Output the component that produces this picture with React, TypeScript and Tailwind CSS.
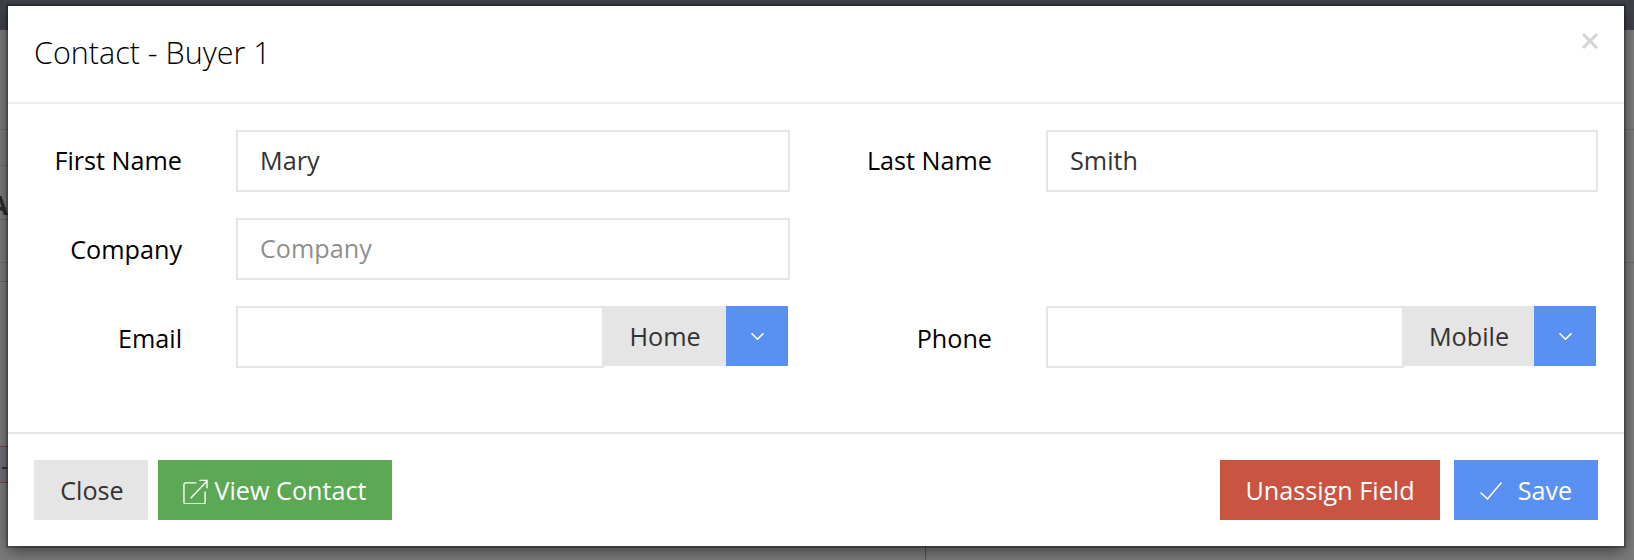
import { ChangeEvent, useState } from "react";

function ChevronIcon() {
  return (
    <svg width="15" height="9" viewBox="0 0 15 9" fill="none" stroke="white" strokeWidth="1.6">
      <path d="M1.5 1.2 L7.5 7.2 L13.5 1.2" />
    </svg>
  );
}

// page behind the dialog, only slivers of it show at the edges
function Backdrop() {
  return (
    <div className="absolute inset-0 -z-10 overflow-hidden bg-[#7c7c7c]">
      <div className="h-[30px] bg-[#3e4248]" />
      <div className="absolute left-0 right-0 top-[129px] h-px bg-[#6c6c6c]" />
      <div className="absolute left-0 top-[165px] h-px w-[8px] bg-[#6c6c6c]" />
      <div className="absolute left-0 top-[219px] h-px w-[8px] bg-[#666666]" />
      <div className="absolute left-0 right-0 top-[262px] h-px bg-[#6c6c6c]" />
      <div className="absolute left-0 top-[281px] h-px w-[8px] bg-[#666666]" />
      <div className="absolute left-0 top-[446px] h-[37px] w-[8px] border-y border-[#8a3a2e] bg-[#6f7178]" />
      <span className="absolute left-[-10px] top-[188px] text-[26px] font-bold leading-[34px] text-[#2a2a2a]">A</span>
      <div className="absolute left-[2px] top-[467px] h-[2px] w-[5px] bg-[#333333]" />
      <div className="absolute bottom-0 left-[925px] top-[540px] w-px bg-[#555555]" />
    </div>
  );
}

function TextField({ value, placeholder }: { value?: string; placeholder?: string }) {
  const [text, setText] = useState(value ?? "");
  return (
    <input
      type="text"
      value={text}
      placeholder={placeholder}
      onChange={(e: ChangeEvent<HTMLInputElement>) => setText(e.target.value)}
      className="h-[62px] w-full border-2 border-[#e5e5e5] bg-white px-[22px] pb-[2px] text-[25.2px] text-[#333333] outline-none placeholder:text-[#8f8f8f]"
    />
  );
}

function TypedField({ type, typeWidth }: { type: string; typeWidth: string }) {
  return (
    <div className="flex items-start pr-[2px]">
      <input
        type="text"
        className="-mr-[2px] h-[62px] min-w-0 flex-1 border-2 border-[#e5e5e5] bg-white px-[22px] text-[25.2px] text-[#333333] outline-none"
      />
      <div className={`relative flex h-[60px] items-center justify-center bg-[#e5e5e5] pl-[2px] pt-[2px] text-[25.2px] text-[#333333] ${typeWidth}`}>
        {type}
      </div>
      <button className="flex h-[60px] w-[62px] items-center justify-center bg-[#5a90f2]">
        <ChevronIcon />
      </button>
    </div>
  );
}

function Label({ children, low }: { children: string; low?: boolean }) {
  return <label className={low ? "mt-[3px] text-right text-[25.2px] text-black" : "text-right text-[25.2px] text-black"}>{children}</label>;
}

export default function App() {
  return (
    <div
      className="relative z-0 h-[560px] w-[1634px] overflow-hidden pl-[8px] pt-[6px]"
      style={{ fontFamily: '"Open Sans", sans-serif' }}
    >
      <Backdrop />
      <div className="w-[1616px] bg-white shadow-[0_0_0_2px_rgba(0,0,0,0.25),0_5px_15px_rgba(0,0,0,0.5)]">
        <div className="flex h-[98px] items-center justify-between border-b-2 border-[#eeeeee] pl-[26px] pr-[26px]">
          <h3 className="-mt-[2px] text-[30.5px] font-light text-black">Contact - Buyer 1</h3>
          <button className="-mt-[26px] text-[#d4d4d4]">
            <svg width="16" height="16" viewBox="0 0 16 16" fill="none" stroke="currentColor" strokeWidth="3">
              <path d="M1 1 L15 15 M15 1 L1 15" />
            </svg>
          </button>
        </div>

        <div className="h-[328px] pt-[26px]">
          <div className="grid grid-cols-[174px_554px_148px_552px] items-center gap-x-[54px] gap-y-[26px]">
            <Label>First Name</Label>
            <TextField value="Mary" />
            <Label>Last Name</Label>
            <TextField value="Smith" />

            <span className="mt-[2px] text-right text-[25.2px] text-black">Company</span>
            <TextField placeholder="Company" />
            <div className="col-span-2" />

            <Label low>Email</Label>
            <TypedField type="Home" typeWidth="w-[124px]" />
            <Label low>Phone</Label>
            <TypedField type="Mobile" typeWidth="w-[132px]" />
          </div>
        </div>

        <div className="flex h-[114px] items-start justify-between border-t-2 border-[#e5e5e5] pl-[26px] pr-[26px] pt-[26px]">
          <div className="flex gap-[10px]">
            <button className="h-[60px] w-[114px] bg-[#e5e5e5] pl-[2px] pt-[2px] text-[25.2px] text-[#333333]">Close</button>
            <button className="flex h-[60px] w-[234px] items-center justify-center gap-[6px] bg-[#5ca854] pt-[2px] text-[25.2px] text-white">
              <svg width="25" height="25" viewBox="0 0 26 26" fill="none" stroke="white" strokeWidth="1.4">
                <path d="M14 4 H3 Q1 4 1 6 V24 Q1 26 3 26 H21 Q23 26 23 24 V13" />
                <path d="M8 20 L25 2 M17 1.5 H25 V9.5" />
              </svg>
              View Contact
            </button>
          </div>
          <div className="flex gap-[14px]">
            <button className="h-[60px] w-[220px] bg-[#c95442] pt-[2px] text-[25.2px] text-white">Unassign Field</button>
            <button className="flex h-[60px] w-[144px] items-center justify-center gap-[16px] bg-[#5a90f2] pt-[2px] text-[25.2px] text-white">
              <svg width="22" height="18" viewBox="0 0 22 18" fill="none" stroke="white" strokeWidth="1.5">
                <path d="M0.5 10.5 L7.5 17 L21.5 0.5" />
              </svg>
              Save
            </button>
          </div>
        </div>
      </div>
    </div>
  );
}
